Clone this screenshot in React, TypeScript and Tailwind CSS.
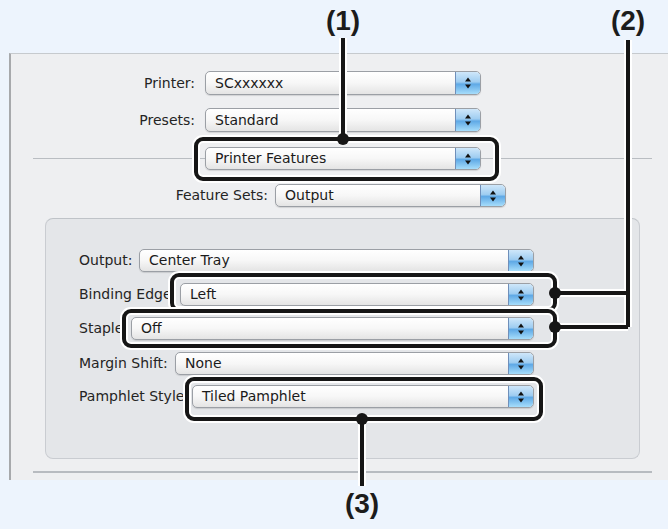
import React from "react";

const font = { fontFamily: '"DejaVu Sans", "Liberation Sans", sans-serif' };

function Arrows() {
  return (
    <div className="h-full w-[25px] shrink-0 rounded-r-[4px] border-l border-[#6f8fba] bg-[linear-gradient(to_bottom,#cfe7fa_0%,#9fcdf1_45%,#5fa9e6_55%,#a6ddfb_100%)] flex items-center justify-center">
      <svg width="8" height="12" viewBox="0 0 8 12">
        <path d="M4 0.5 L7 4.5 L1 4.5 Z" fill="#111" />
        <path d="M4 11.5 L7 7.5 L1 7.5 Z" fill="#111" />
      </svg>
    </div>
  );
}

function Popup({ value, w, h = 23 }: { value: string; w: string; h?: number }) {
  return (
    <div
      className={`relative flex shrink-0 items-center overflow-hidden rounded-[5px] border border-[#9b9fa5] bg-[linear-gradient(to_bottom,#ffffff_0%,#f7f7f7_50%,#e4e4e4_100%)] shadow-[0_1px_1px_rgba(0,0,0,0.12)] ${w}`}
      style={{ height: h }}
    >
      <span className="flex-1 truncate pl-[9px] text-[14px] text-[#1b1b1b]">{value}</span>
      <Arrows />
    </div>
  );
}

function Row({
  label,
  labelW,
  value,
  popupW,
  h,
  className = "",
}: {
  label: string;
  labelW: string;
  value: string;
  popupW: string;
  h?: number;
  className?: string;
}) {
  return (
    <div className={`flex items-center ${className}`}>
      <div className={`shrink-0 whitespace-nowrap text-[14px] text-[#242424] ${labelW}`}>{label}</div>
      <Popup value={value} w={popupW} h={h} />
    </div>
  );
}

function Callouts() {
  const boxes = [
    { x: 196, y: 139, w: 301, h: 40 },
    { x: 172, y: 275, w: 383, h: 35 },
    { x: 124, y: 311, w: 431, h: 35 },
    { x: 187, y: 379, w: 354, h: 40 },
  ];
  const lines = [
    "M343 38 L343 139",
    "M628 40 L628 327 M555 293 L628 293 M555 327 L628 327",
    "M362 419 L362 486",
  ];
  const dots = [
    [343, 139],
    [555, 293],
    [555, 327],
    [362, 419],
  ];
  return (
    <svg className="pointer-events-none absolute inset-0 z-20" width="668" height="529" viewBox="0 0 668 529">
      {boxes.map((b, i) => (
        <g key={i}>
          <rect x={b.x} y={b.y} width={b.w} height={b.h} rx="7" fill="none" stroke="#fff" strokeWidth="8" />
          <rect x={b.x} y={b.y} width={b.w} height={b.h} rx="7" fill="none" stroke="#161616" strokeWidth="4" />
        </g>
      ))}
      {lines.map((d, i) => (
        <path key={"w" + i} d={d} fill="none" stroke="#fff" strokeWidth="8" />
      ))}
      {lines.map((d, i) => (
        <path key={"b" + i} d={d} fill="none" stroke="#161616" strokeWidth="4" />
      ))}
      {dots.map(([cx, cy], i) => (
        <circle key={i} cx={cx} cy={cy} r="6" fill="#161616" />
      ))}
    </svg>
  );
}

export default function App() {
  const tag = "w-[40px] text-center text-[28px] font-bold leading-none text-[#1c1c1c]";
  const tagFont = { fontFamily: '"Liberation Sans", Arial, sans-serif' };
  return (
    <div className="relative h-[529px] w-[668px] overflow-hidden bg-[#edf4fd]" style={font}>
      {/* callout numbers on top */}
      <div className="flex h-[53px] pt-[7px]" style={tagFont}>
        <div className={`ml-[323px] ${tag}`}>(1)</div>
        <div className={`ml-[245px] ${tag}`}>(2)</div>
      </div>

      {/* dialog */}
      <div className="ml-[9px] flex h-[427px] w-[659px] flex-col border-l-2 border-t border-l-[#a7a9ac] border-t-[#c6cace] bg-[#eeeff1] pt-[17px]">
        <Row label="Printer:" labelW="w-[194px] pr-[10px] text-right" value="SCxxxxxx" popupW="w-[276px]" h={24} />
        <Row label="Presets:" labelW="w-[194px] pr-[10px] text-right" value="Standard" popupW="w-[276px]" h={24} className="mt-[13px]" />

        <div className="mt-[15px] flex items-center">
          <div className="ml-[22px] h-px w-[172px] bg-[#b9bdc2]" />
          <Popup value="Printer Features" w="w-[276px]" />
          <div className="h-px w-[171px] bg-[#b9bdc2]" />
        </div>

        <Row label="Feature Sets:" labelW="w-[264px] pr-[7px] text-right" value="Output" popupW="w-[231px]" className="mt-[14px]" />

        <div className="ml-[34px] mt-[11px] h-[241px] w-[595px] rounded-[8px] border border-[#c9ccd1] border-t-[#bfc3c8] bg-[#e4e6e9] pl-[33px] pt-[30px]">
          <Row label="Output:" labelW="w-[60px]" value="Center Tray" popupW="w-[395px]" />
          <Row label="Binding Edge:" labelW="w-[101px]" value="Left" popupW="w-[354px]" className="mt-[11px]" />
          <Row label="Staple:" labelW="w-[52px]" value="Off" popupW="w-[403px]" className="mt-[11px]" />
          <Row label="Margin Shift:" labelW="w-[96px]" value="None" popupW="w-[359px]" className="mt-[12px]" />
          <Row label="Pamphlet Style:" labelW="w-[113px]" value="Tiled Pamphlet" popupW="w-[342px]" className="mt-[10px]" />
        </div>

        <div className="ml-[22px] mt-[12px] h-[2px] w-[619px] bg-[#b7bbc0]" />
      </div>

      <div className="flex pt-[10px]" style={tagFont}>
        <div className={`ml-[342px] ${tag}`}>(3)</div>
      </div>

      <Callouts />
    </div>
  );
}
